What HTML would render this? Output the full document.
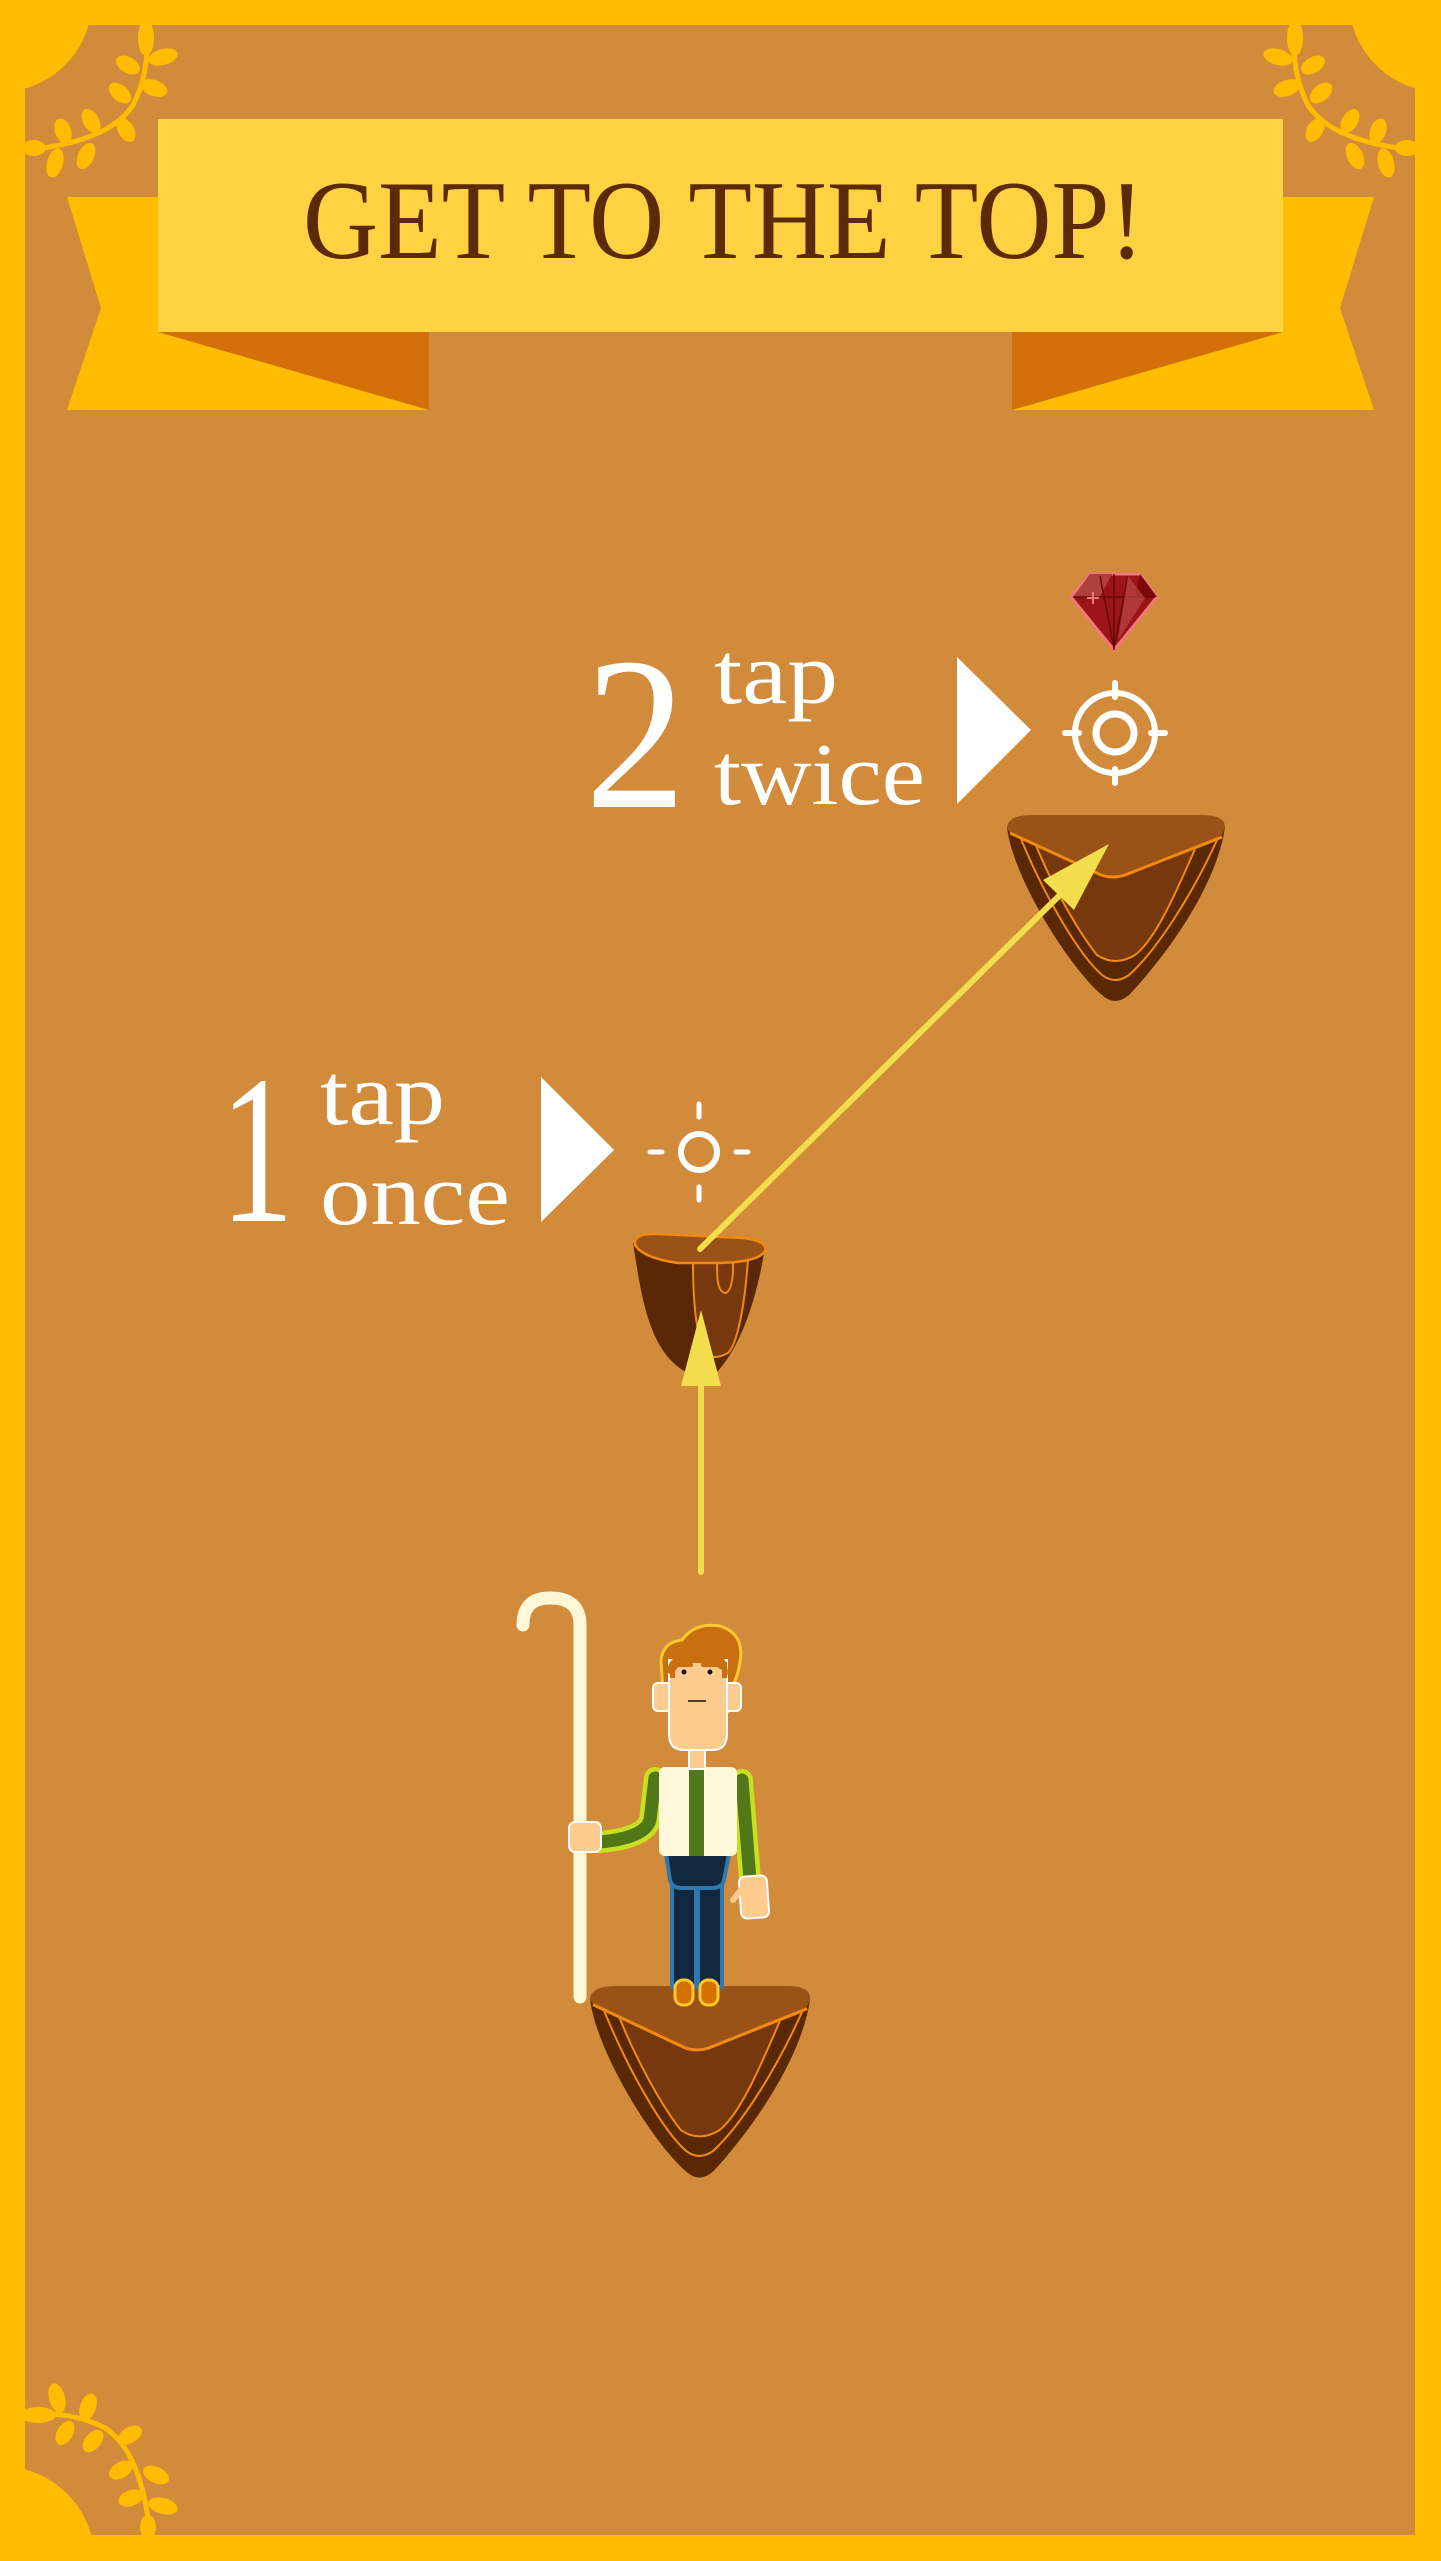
<!DOCTYPE html>
<html><head><meta charset="utf-8"><style>
html,body{margin:0;padding:0;background:#D28B3A;}
svg{display:block}
</style></head><body>
<svg width="1441" height="2561" viewBox="0 0 1441 2561" xmlns="http://www.w3.org/2000/svg">
<defs>
<g id="laurel" fill="#FFBC00">
<path d="M25,2415 Q70,2410 105,2428 Q142,2452 150,2535" fill="none" stroke="#FFBC00" stroke-width="5"/>
<ellipse cx="38" cy="2415" rx="18" ry="8"/>
<ellipse cx="57" cy="2398" rx="8" ry="15" transform="rotate(-15 57 2398)"/>
<ellipse cx="88" cy="2407" rx="8" ry="14" transform="rotate(20 88 2407)"/>
<ellipse cx="65" cy="2433" rx="8" ry="13" transform="rotate(30 65 2433)"/>
<ellipse cx="93" cy="2441" rx="8" ry="13" transform="rotate(40 93 2441)"/>
<ellipse cx="130" cy="2435" rx="8" ry="13" transform="rotate(60 130 2435)"/>
<ellipse cx="121" cy="2470" rx="8" ry="13" transform="rotate(60 121 2470)"/>
<ellipse cx="156" cy="2475" rx="8" ry="14" transform="rotate(-65 156 2475)"/>
<ellipse cx="131" cy="2498" rx="8" ry="13" transform="rotate(70 131 2498)"/>
<ellipse cx="163" cy="2506" rx="8" ry="15" transform="rotate(-75 163 2506)"/>
<ellipse cx="148" cy="2527" rx="8" ry="12"/>
</g>
<g id="plat">
<path d="M0,12 C5,60 60,150 95,180 Q108,192 122,180 C160,140 210,70 218,12 Z" fill="#5A2804"/>
<path d="M28,28 L94,60 Q106,64 118,60 L188,34 C168,80 148,125 128,140 Q108,152 90,140 C70,115 45,70 28,28Z" fill="#77380E"/>
<path d="M14,24 C38,82 72,140 95,160 Q108,170 122,160 C150,135 185,80 210,25" fill="none" stroke="#F08A10" stroke-width="2"/>
<path d="M28,28 C45,70 70,115 90,140 Q108,152 128,140 C148,125 168,80 188,34" fill="none" stroke="#F08A10" stroke-width="2"/>
<path d="M0,12 Q2,0 25,0 L195,0 Q218,0 218,12 Q215,25 200,30 L118,60 Q106,64 94,60 L15,25 Q2,20 0,12Z" fill="#9A5216"/>
<path d="M3,18 L94,60 Q106,64 118,60 L215,22" fill="none" stroke="#F08A10" stroke-width="3"/>
</g>
</defs>
<rect width="1441" height="2561" fill="#D28B3A"/>
<rect x="0" y="0" width="1441" height="25" fill="#FFBC00"/>
<rect x="0" y="2535" width="1441" height="26" fill="#FFBC00"/>
<rect x="0" y="0" width="25" height="2561" fill="#FFBC00"/>
<rect x="1415" y="0" width="26" height="2561" fill="#FFBC00"/>
<circle cx="0" cy="0" r="92" fill="#FFBC00"/>
<circle cx="1441" cy="0" r="92" fill="#FFBC00"/>
<circle cx="0" cy="2561" r="95" fill="#FFBC00"/>
<use href="#laurel"/>
<use href="#laurel" transform="matrix(0,1,-1,0,2561,0)"/>
<use href="#laurel" transform="matrix(0,1,1,0,-1120,0)"/>
<polygon points="67,197 158,197 158,332 429,410 67,410 101,308" fill="#FFBC00"/>
<polygon points="158,332 429,332 429,410" fill="#D4700A"/>
<polygon points="1374,197 1283,197 1283,332 1012,410 1374,410 1340,308" fill="#FFBC00"/>
<polygon points="1283,332 1012,332 1012,410" fill="#D4700A"/>
<rect x="158" y="119" width="1125" height="213" fill="#FFD242"/>
<text x="303" y="258" font-family="Liberation Serif, serif" font-size="112" fill="#5C2A06" textLength="841" lengthAdjust="spacingAndGlyphs">GET TO THE TOP!</text>
<g fill="#fff" font-family="Liberation Serif, serif">
<text x="585" y="807" font-size="218" textLength="101" lengthAdjust="spacingAndGlyphs">2</text>
<text x="714" y="703" font-size="88" textLength="124" lengthAdjust="spacingAndGlyphs">tap</text>
<text x="714" y="804" font-size="88" textLength="211" lengthAdjust="spacingAndGlyphs">twice</text>
<text x="220" y="1221" font-size="212" textLength="74" lengthAdjust="spacingAndGlyphs">1</text>
<text x="320" y="1124" font-size="88" textLength="125" lengthAdjust="spacingAndGlyphs">tap</text>
<text x="320" y="1224" font-size="88" textLength="190" lengthAdjust="spacingAndGlyphs">once</text>
</g>
<polygon points="957,657 1031,730 957,804" fill="#fff"/>
<polygon points="541,1077 614,1150 541,1222" fill="#fff"/>
<g stroke="#fff" fill="none" stroke-linecap="round">
<circle cx="1115" cy="733" r="40" stroke-width="6"/>
<circle cx="1115" cy="733" r="19" stroke-width="7"/>
<g stroke-width="6">
<line x1="1115" y1="683" x2="1115" y2="697"/><line x1="1115" y1="769" x2="1115" y2="783"/>
<line x1="1065" y1="733" x2="1079" y2="733"/><line x1="1151" y1="733" x2="1165" y2="733"/>
</g>
<circle cx="699" cy="1152" r="18" stroke-width="6"/>
<g stroke-width="5">
<line x1="699" y1="1104" x2="699" y2="1117"/><line x1="699" y1="1187" x2="699" y2="1200"/>
<line x1="650" y1="1152" x2="662" y2="1152"/><line x1="736" y1="1152" x2="748" y2="1152"/>
</g>
</g>
<polygon points="1090,574 1140,574 1157,597 1114,650 1071,597" fill="#9A1418" stroke="#F07878" stroke-width="3"/>
<polygon points="1090,574 1112,574 1100,597 1073,597" fill="#B04040"/>
<polygon points="1140,574 1157,597 1135,597" fill="#7A0A0C"/>
<g stroke="#6A0808" stroke-width="1.5"><line x1="1073" y1="597" x2="1155" y2="597"/><line x1="1114" y1="574" x2="1114" y2="650"/><line x1="1100" y1="576" x2="1114" y2="648"/><line x1="1128" y1="576" x2="1114" y2="648"/></g>
<polygon points="1128,576 1145,598 1118,640" fill="#C05050" opacity="0.6"/>
<g stroke="#F07878" stroke-width="2"><line x1="1087" y1="598" x2="1099" y2="598"/><line x1="1093" y1="592" x2="1093" y2="604"/></g>
<use href="#plat" transform="translate(1007,815)"/>
<g transform="translate(633,1233)">
<path d="M0,10 C8,60 15,120 55,140 Q70,148 85,138 C110,110 125,60 132,14 Z" fill="#5A2804"/>
<path d="M60,28 L115,26 C112,70 105,110 95,120 Q80,128 72,120 C62,100 60,60 60,28Z" fill="#77380E"/>
<path d="M60,28 C60,60 62,100 72,120 Q80,128 95,120 C105,110 112,70 115,26" fill="none" stroke="#F08A10" stroke-width="2"/>
<path d="M84,28 C84,45 84,58 92,60 Q98,60 100,40 L100,26" fill="none" stroke="#F08A10" stroke-width="2"/>
<path d="M2,8 Q5,0 25,1 L110,5 Q135,8 132,18 Q125,30 80,30 L45,30 Q10,25 2,12Z" fill="#9A5216" stroke="#F08A10" stroke-width="2.5"/>
</g>
<use href="#plat" transform="translate(590,1986) scale(1.01,1.03)"/>
<g stroke="#F2DE4C" stroke-width="6" stroke-linecap="round" fill="#F2DE4C">
<line x1="700" y1="1249" x2="1065" y2="890"/>
<line x1="701" y1="1572" x2="701" y2="1380"/>
</g>
<polygon points="1109,844 1074,910 1043,880" fill="#F2DE4C"/>
<polygon points="701,1310 721,1386 681,1386" fill="#F2DE4C"/>
<path d="M523,1625 Q523,1598 550,1598 Q580,1598 580,1625 L580,1997" fill="none" stroke="#FFF8D8" stroke-width="13" stroke-linecap="round"/>
<path d="M655,1778 L650,1820 Q645,1838 600,1842" fill="none" stroke="#C8E020" stroke-width="22" stroke-linecap="round"/>
<path d="M655,1778 L650,1820 Q645,1838 600,1842" fill="none" stroke="#507818" stroke-width="13" stroke-linecap="round"/>
<path d="M742,1780 L750,1880" fill="none" stroke="#C8E020" stroke-width="22" stroke-linecap="round"/>
<path d="M742,1780 L750,1880" fill="none" stroke="#507818" stroke-width="13" stroke-linecap="round"/>
<rect x="672" y="1875" width="24" height="112" fill="#12283F" stroke="#3078B0" stroke-width="4"/>
<rect x="698" y="1875" width="24" height="112" fill="#12283F" stroke="#3078B0" stroke-width="4"/>
<path d="M666,1854 L729,1854 L724,1880 Q722,1888 712,1888 L682,1888 Q672,1888 670,1880Z" fill="#12283F" stroke="#3078B0" stroke-width="4"/>
<rect x="659" y="1767" width="78" height="89" rx="6" fill="#FFF8D8"/>
<rect x="689" y="1767" width="15" height="89" fill="#507818"/>
<rect x="675" y="1980" width="18" height="25" rx="8" fill="#D47000" stroke="#FFC830" stroke-width="3"/>
<rect x="700" y="1980" width="18" height="25" rx="8" fill="#D47000" stroke="#FFC830" stroke-width="3"/>
<rect x="569" y="1822" width="32" height="30" rx="6" fill="#FFCB8E" stroke="#fff" stroke-width="2"/>
<rect x="740" y="1876" width="28" height="42" rx="6" fill="#FFCB8E" stroke="#fff" stroke-width="2" transform="rotate(-4 754 1897)"/>
<path d="M741,1890 L733,1900" stroke="#FFCB8E" stroke-width="6" stroke-linecap="round"/>
<rect x="689" y="1745" width="16" height="24" fill="#FFCB8E" stroke="#fff" stroke-width="2"/>
<path d="M664,1710 L661,1660 Q663,1642 682,1640 Q695,1622 720,1626 Q745,1634 740,1662 Q737,1682 728,1692 L728,1712Z" fill="#C87010" stroke="#FFC830" stroke-width="3"/>
<rect x="653" y="1683" width="18" height="28" rx="5" fill="#FFCB8E" stroke="#fff" stroke-width="2"/>
<rect x="723" y="1683" width="18" height="28" rx="5" fill="#FFCB8E" stroke="#fff" stroke-width="2"/>
<path d="M669,1660 L727,1660 L727,1734 Q727,1750 712,1750 L684,1750 Q669,1750 669,1734Z" fill="#FFCB8E" stroke="#fff" stroke-width="2"/>
<path d="M667,1672 Q668,1655 690,1653 L715,1653 Q728,1656 728,1675 L724,1672 Q712,1660 680,1664 L672,1676Z" fill="#C87010"/>
<rect x="670" y="1662" width="5" height="16" fill="#C87010"/>
<rect x="722" y="1662" width="5" height="16" fill="#C87010"/>
<path d="M676,1665 L691,1665 M703,1665 L718,1665" stroke="#C87010" stroke-width="4" stroke-linecap="round"/>
<circle cx="684" cy="1672" r="2.5" fill="#111"/>
<circle cx="710" cy="1672" r="2.5" fill="#111"/>
<line x1="688" y1="1701" x2="706" y2="1701" stroke="#111" stroke-width="1.5"/>
</svg>
</body></html>
